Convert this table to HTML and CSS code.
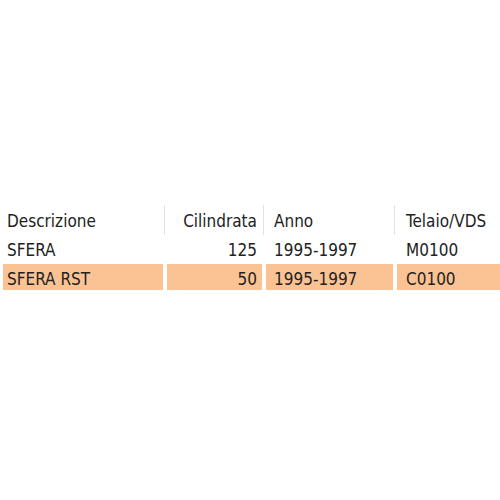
FILE: index.html
```html
<!DOCTYPE html>
<html>
<head>
<meta charset="utf-8">
<link rel="stylesheet" href="styles.css">
</head>
<body>
<div class="page">
  <div class="grid">
    <div class="cell head c1">Descrizione</div>
    <div class="cell head c2 sep">Cilindrata</div>
    <div class="cell head c3 sep">Anno</div>
    <div class="cell head c4 sep">Telaio/VDS</div>

    <div class="cell c1">SFERA</div>
    <div class="cell c2">125</div>
    <div class="cell c3">1995-1997</div>
    <div class="cell c4">M0100</div>

    <div class="cell hl c1">SFERA RST</div>
    <div class="cell hl c2">50</div>
    <div class="cell hl c3">1995-1997</div>
    <div class="cell hl c4">C0100</div>
  </div>
</div>
</body>
</html>
```
FILE: styles.css
```css
html, body {
  margin: 0;
  padding: 0;
  background: #ffffff;
}
.page {
  width: 500px;
  height: 500px;
  overflow: hidden;
  padding-top: 205px;
  padding-left: 3px;
  box-sizing: border-box;
}
.grid {
  display: grid;
  grid-template-columns: 160px 95px 127px 110px;
  column-gap: 4px;
  row-gap: 3px;
  font-family: "DejaVu Sans Condensed", "DejaVu Sans", sans-serif;
  font-size: 17px;
  color: #222222;
}
.cell {
  height: 23px;
  line-height: 25px;
  white-space: nowrap;
}
.c1 { padding-left: 4px; }
.c2 { padding-right: 5px; text-align: right; }
.c3 { padding-left: 8px; }
.c4 { padding-left: 9px; }
.head {
  height: 30px;
  line-height: 32px;
  position: relative;
}
.sep::before {
  content: "";
  position: absolute;
  left: -3px;
  top: 0;
  width: 1px;
  height: 30px;
  background: #e2e2e2;
}
.hl {
  background: #fbc393;
  height: 26px;
  line-height: 30px;
}
```
